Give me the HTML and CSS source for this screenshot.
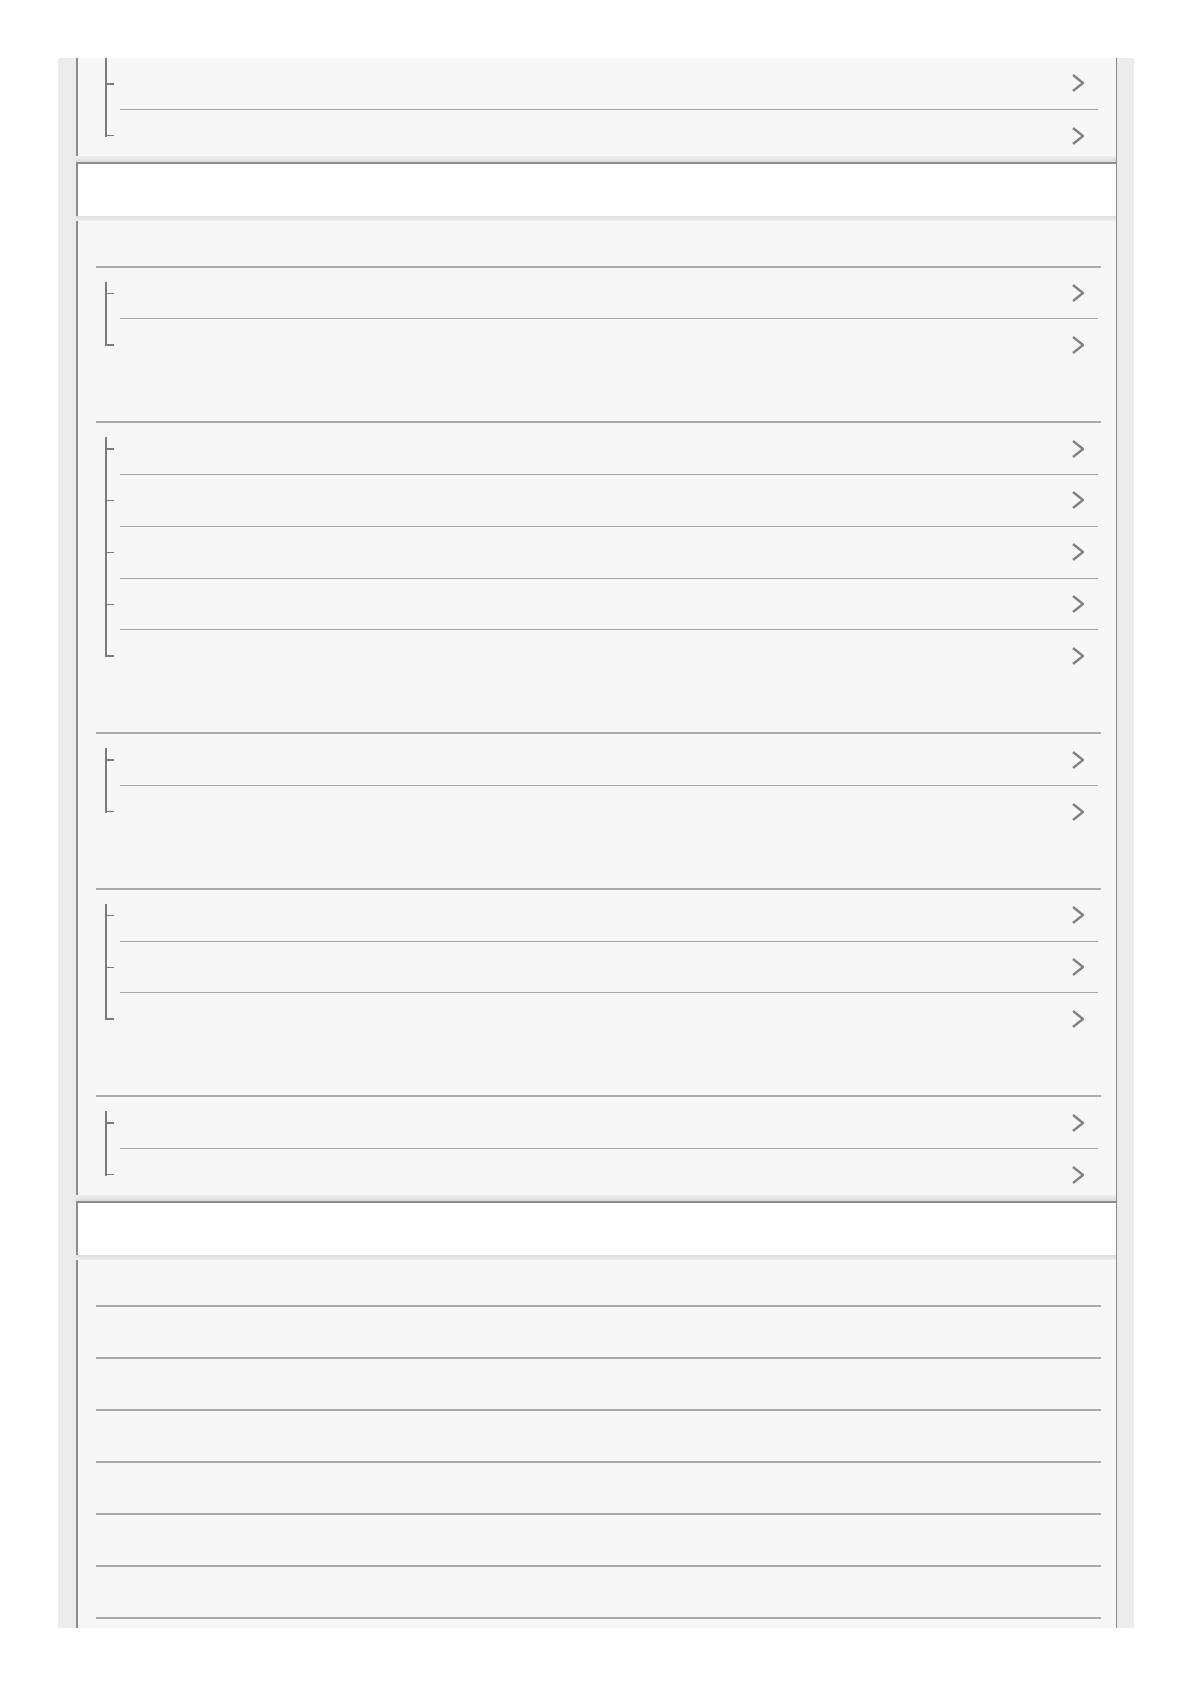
FILE: index.html
```html
<!DOCTYPE html>
<html lang="en">
<head>
  <meta charset="UTF-8">
  <meta name="viewport" content="width=device-width, initial-scale=1.0">
  <title>Contents</title>
  <link rel="stylesheet" href="styles.css">
</head>
<body>
  <div class="page">
    <div class="doc">

      <!-- tail of the previous section -->
      <ul class="tree cont">
        <li><a class="row" href="#"><svg class="chev" viewBox="0 0 12 18"><polyline points="1,1 11,9 1,17"/></svg></a></li>
        <li><a class="row" href="#"><svg class="chev" viewBox="0 0 12 18"><polyline points="1,1 11,9 1,17"/></svg></a></li>
      </ul>

      <!-- section 2 -->
      <div class="section-head"></div>

      <div class="group-title"></div>
      <ul class="tree">
        <li><a class="row" href="#"><svg class="chev" viewBox="0 0 12 18"><polyline points="1,1 11,9 1,17"/></svg></a></li>
        <li><a class="row" href="#"><svg class="chev" viewBox="0 0 12 18"><polyline points="1,1 11,9 1,17"/></svg></a></li>
      </ul>

      <div class="group-title"></div>
      <ul class="tree">
        <li><a class="row" href="#"><svg class="chev" viewBox="0 0 12 18"><polyline points="1,1 11,9 1,17"/></svg></a></li>
        <li><a class="row" href="#"><svg class="chev" viewBox="0 0 12 18"><polyline points="1,1 11,9 1,17"/></svg></a></li>
        <li><a class="row" href="#"><svg class="chev" viewBox="0 0 12 18"><polyline points="1,1 11,9 1,17"/></svg></a></li>
        <li><a class="row" href="#"><svg class="chev" viewBox="0 0 12 18"><polyline points="1,1 11,9 1,17"/></svg></a></li>
        <li><a class="row" href="#"><svg class="chev" viewBox="0 0 12 18"><polyline points="1,1 11,9 1,17"/></svg></a></li>
      </ul>

      <div class="group-title"></div>
      <ul class="tree">
        <li><a class="row" href="#"><svg class="chev" viewBox="0 0 12 18"><polyline points="1,1 11,9 1,17"/></svg></a></li>
        <li><a class="row" href="#"><svg class="chev" viewBox="0 0 12 18"><polyline points="1,1 11,9 1,17"/></svg></a></li>
      </ul>

      <div class="group-title"></div>
      <ul class="tree">
        <li><a class="row" href="#"><svg class="chev" viewBox="0 0 12 18"><polyline points="1,1 11,9 1,17"/></svg></a></li>
        <li><a class="row" href="#"><svg class="chev" viewBox="0 0 12 18"><polyline points="1,1 11,9 1,17"/></svg></a></li>
        <li><a class="row" href="#"><svg class="chev" viewBox="0 0 12 18"><polyline points="1,1 11,9 1,17"/></svg></a></li>
      </ul>

      <div class="group-title"></div>
      <ul class="tree">
        <li><a class="row" href="#"><svg class="chev" viewBox="0 0 12 18"><polyline points="1,1 11,9 1,17"/></svg></a></li>
        <li><a class="row" href="#"><svg class="chev" viewBox="0 0 12 18"><polyline points="1,1 11,9 1,17"/></svg></a></li>
      </ul>

      <!-- section 3 -->
      <div class="section-head"></div>

      <div class="group-title"></div>
      <div class="group-title"></div>
      <div class="group-title"></div>
      <div class="group-title"></div>
      <div class="group-title"></div>
      <div class="group-title"></div>
      <div class="group-title"></div>
      <div class="group-title"></div>

    </div>
  </div>
</body>
</html>
```

FILE: styles.css
```css
body {
  margin: 0;
  background: #fff;
  font-family: "Liberation Sans", Arial, sans-serif;
}
.page {
  margin: 58px 0 0 58px;
  width: 1076px;
  height: 1570px;
  box-sizing: border-box;
  padding: 0 17px 0 18px;
  background: #ebebeb;
  overflow: hidden;
}
.doc {
  height: 100%;
  background: #f7f7f7;
  border-left: 2px solid #8c8c8c;
  border-right: 1px solid #8c8c8c;
}
.section-head {
  position: relative;
  height: 52px;
  background: #fff;
  border-top: 2px solid #8c8c8c;
}
.section-head::before {
  content: "";
  position: absolute;
  left: -2px;
  right: 0;
  top: -8px;
  height: 6px;
  background: linear-gradient(#efefef, #dcdcdc);
}
.section-head::after {
  content: "";
  position: absolute;
  left: -2px;
  right: 0;
  top: 100%;
  height: 5px;
  background: linear-gradient(#dddddd, #eeeeee);
}
.group-title {
  height: 52px;
  box-sizing: border-box;
  margin: 0 15px 0 18px;
  border-bottom: 2px solid #aaaaaa;
}
.tree {
  position: relative;
  list-style: none;
  margin: 0 18px 0 27px;
  padding: 0 0 0 15px;
}
.tree::before {
  content: "";
  position: absolute;
  left: 0;
  top: 14px;
  bottom: 25px;
  width: 1.5px;
  background: #7b7b7b;
}
.tree.cont::before {
  top: 0;
}
.tree li {
  position: relative;
  height: 51.8px;
  box-sizing: border-box;
  border-bottom: 1px solid #a8a8a8;
}
.tree li:last-child {
  border-bottom: 0;
}
.tree li::before {
  content: "";
  position: absolute;
  left: -15px;
  top: 25px;
  width: 9px;
  height: 1.5px;
  background: #7b7b7b;
}
.row {
  display: flex;
  align-items: center;
  justify-content: flex-end;
  height: 100%;
  padding-right: 14px;
  color: #333;
  text-decoration: none;
}
.chev {
  width: 12px;
  height: 18px;
  fill: none;
  stroke: #808080;
  stroke-width: 2.3;
}
```
